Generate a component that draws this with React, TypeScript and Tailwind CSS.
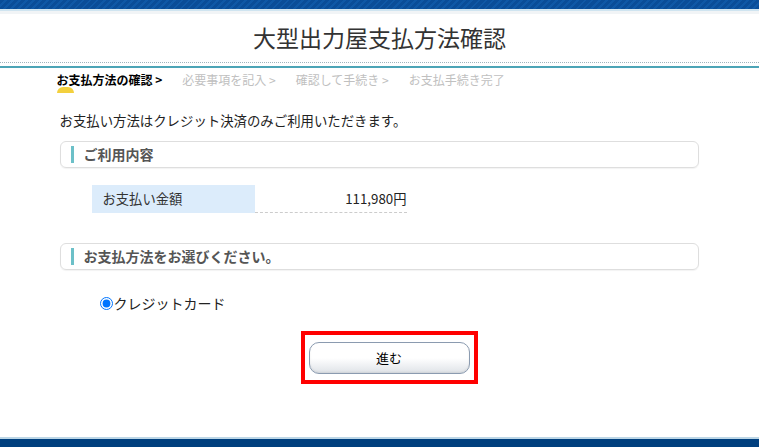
import React from "react";

const steps = [
  { label: "お支払方法の確認 >", active: true },
  { label: "必要事項を記入 >", active: false },
  { label: "確認して手続き >", active: false },
  { label: "お支払手続き完了", active: false },
];

function SectionTitle({ children }: { children: React.ReactNode }) {
  return (
    <div className="flex h-[27px] items-center rounded-[6px] border border-[#dedede] pl-[10px] shadow-[0_1px_1px_rgba(0,0,0,0.05)]">
      <span className="h-[17px] w-[3px] bg-[#6cc0c8]" />
      <span className="ml-[10px] text-[14px] font-bold text-[#555]">{children}</span>
    </div>
  );
}

export default function App() {
  return (
    <div
      className="flex min-h-[447px] flex-col bg-white text-[#222]"
      style={{ fontFamily: '"Noto Sans CJK JP", "Noto Sans", sans-serif' }}
    >
      {/* top bar */}
      <div className="h-[9px] bg-[repeating-linear-gradient(135deg,#0a4d98_0px,#0a4d98_3px,#0f58a6_3px,#0f58a6_5px)]" />
      <div className="h-[2px] bg-[#cfe4f0]" />
      <div className="h-[3px] bg-[#f1f4f6]" />

      <header className="flex h-[48px] items-center justify-center pb-[2px]">
        <h1 className="text-[23px] font-normal leading-none text-[#333]">大型出力屋支払方法確認</h1>
      </header>
      <div className="border-b border-dotted border-[#9fb3bd]" />
      <div className="mt-[3px] h-[2px] bg-[#4ca4b6]" />

      {/* steps */}
      <div className="mx-auto mt-[3px] flex w-[646px] gap-[20px] text-[12px] leading-[17px]">
        {steps.map((s) => (
          <div key={s.label} className="flex flex-col items-start">
            <span className={s.active ? "font-bold text-black" : "text-[#c0c0c0]"}>{s.label}</span>
            {s.active && <span className="mt-[-1px] h-[6px] w-[17px] rounded-t-full bg-[#f3d03e]" />}
          </div>
        ))}
      </div>

      <main className="mx-auto w-[640px]">
        <p className="mt-[18px] text-[13.4px] leading-[18px]">
          お支払い方法はクレジット決済のみご利用いただきます。
        </p>

        <div className="mt-[12px] w-[639px]">
          <SectionTitle>ご利用内容</SectionTitle>
        </div>

        <div className="ml-[32px] mt-[17px] flex h-[28px] w-[315px] text-[13.3px]">
          <div className="flex w-[163px] items-center bg-[#dcecfb] pl-[11px] text-[#333]">お支払い金額</div>
          <div className="flex flex-1 items-center justify-end border-b border-dashed border-[#cccccc]">
            111,980円
          </div>
        </div>

        <div className="mt-[30px] w-[639px]">
          <SectionTitle>お支払方法をお選びください。</SectionTitle>
        </div>

        <label className="ml-[40px] mt-[23px] flex items-center text-[14px]">
          <input type="radio" name="pay" defaultChecked className="m-0 h-[13px] w-[13px]" />
          <span className="ml-[1px]">クレジットカード</span>
        </label>

        <div className="mt-[17px] flex justify-center pl-[19px]">
          <div className="flex h-[53px] w-[177px] items-center justify-center border-[4px] border-[#ff0000]">
            <button className="flex h-[32px] w-[161px] items-center justify-center rounded-[10px] border border-[#8b9bb0] bg-gradient-to-b from-white via-white to-[#dfe3e8] text-[13px] text-black shadow-[inset_0_-1px_2px_rgba(0,0,0,0.08)]">
              進む
            </button>
          </div>
        </div>
      </main>

      <div className="flex-1" />
      <div className="h-[2px] bg-[#bcd6e6]" />
      <div className="h-[8px] bg-[#003f7e]" />
    </div>
  );
}
